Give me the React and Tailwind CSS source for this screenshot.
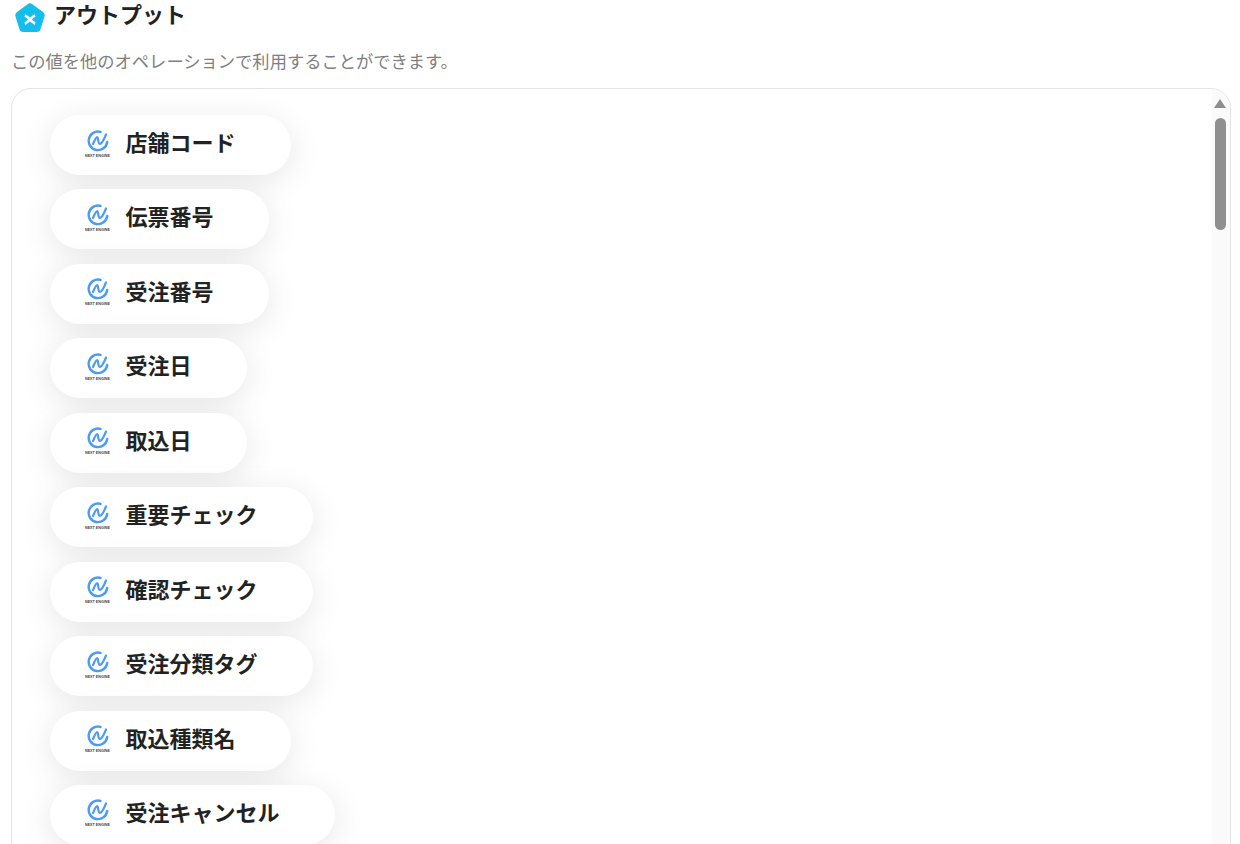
import React from 'react';

const outputs = [
  '店舗コード',
  '伝票番号',
  '受注番号',
  '受注日',
  '取込日',
  '重要チェック',
  '確認チェック',
  '受注分類タグ',
  '取込種類名',
  '受注キャンセル',
];

const jpFont = "font-['Noto_Sans_CJK_JP',sans-serif]";

// Pentagon mark next to the heading
const HeadingIcon = () => (
  <svg width="32" height="30" viewBox="0 0 32 30" className="shrink-0 mt-[3px]">
    <path
      d="M13.6 1.2 a4 4 0 0 1 4.8 0 L29 9 a4 4 0 0 1 1.5 4.5 L26.5 26.2 a4 4 0 0 1 -3.8 2.8 H9.3 a4 4 0 0 1 -3.8 -2.8 L1.5 13.5 A4 4 0 0 1 3 9 Z"
      fill="#13bdec"
    />
    <path d="M10.8 12.5 C13.5 13 18.5 20 21.2 20.5 M21.2 12.5 C18.5 13 13.5 20 10.8 20.5" stroke="#fff" strokeWidth="2.6" strokeLinecap="butt" fill="none" />
  </svg>
);

const EngineLogo = () => (
  <div className="flex flex-col items-center w-[25px] shrink-0 mb-[2px]">
    <svg width="22" height="22" viewBox="0 0 22 22" fill="none">
      <path
        d="M13.5 1.9 A9.3 9.3 0 1 0 20.2 12"
        stroke="#4a9bf5"
        strokeWidth="2.4"
        strokeLinecap="round"
      />
      <path
        d="M6 14 C7.5 10.5 9.2 6.8 10.4 7.2 C11.6 7.7 10.8 13 12.4 13.8 C14.4 14.4 17 9.5 19 4.5"
        stroke="#4a9bf5"
        strokeWidth="2.2"
        strokeLinecap="round"
      />
    </svg>
    <span className="mt-[2px] text-[3.7px] leading-[5px] font-bold text-[#444] whitespace-nowrap font-['Liberation_Sans',sans-serif]">
      NEXT ENGINE
    </span>
  </div>
);

const OutputChip = ({ label }) => (
  <div className="flex items-center h-[60px] w-fit pl-[35px] pr-[55.5px] gap-[15.5px] bg-white rounded-[30px] shadow-[0_6px_32px_rgba(0,0,0,0.1)]">
    <EngineLogo />
    <span className={`text-[22px] font-bold leading-[30px] pb-[8px] text-[#222] whitespace-nowrap ${jpFont}`}>{label}</span>
  </div>
);

export default function App() {
  return (
    <div className={`h-[844px] overflow-hidden bg-white pl-[11px] pr-[9px] ${jpFont}`}>
      <div className="flex items-start gap-[8px] pl-[3px]">
        <HeadingIcon />
        <h2 className="text-[22px] font-bold leading-[26px] text-[#222]">アウトプット</h2>
      </div>
      <p className="mt-[16px] text-[17.28px] leading-[24px] text-[#7f7f7f]">
        この値を他のオペレーションで利用することができます。
      </p>
      <div className="relative mt-[15px] h-[800px] border border-[#e4e4e4] rounded-[20px] overflow-hidden pt-[26px] pl-[38px]">
        <div className="flex flex-col gap-[14.45px]">
          {outputs.map((label) => (
            <OutputChip key={label} label={label} />
          ))}
        </div>
        {/* scrollbar */}
        <div className="absolute top-0 right-0 bottom-0 w-[18px] bg-[#fafafa]">
          <div className="absolute top-[10px] left-[2px] w-0 h-0 border-x-[6.5px] border-x-transparent border-b-[9px] border-b-[#8f8f8f]" />
          <div className="absolute top-[29px] left-[3px] w-[11px] h-[112px] rounded-full bg-[#8f8f8f]" />
        </div>
      </div>
    </div>
  );
}
